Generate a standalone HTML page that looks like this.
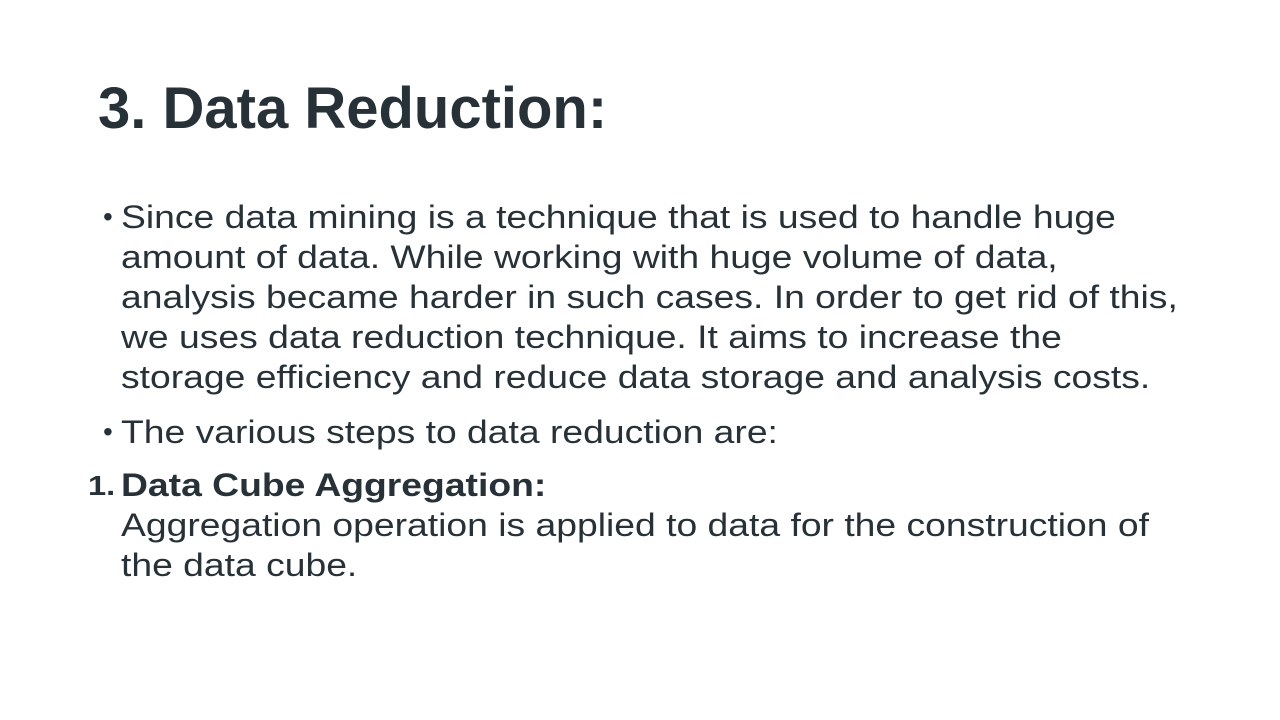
<!DOCTYPE html>
<html><head><style>
body{margin:0;width:1280px;height:720px;background:#fff;position:relative;overflow:hidden;font-family:"Liberation Sans",Arial,sans-serif;color:#263238}
.l{position:absolute;white-space:nowrap;font-size:32px;line-height:32px;left:121px;transform:scaleX(1.165);transform-origin:0 0}
.t{position:absolute;left:98px;top:80px;font-size:58px;line-height:58px;font-weight:bold;white-space:nowrap}
.b{position:absolute;left:103px;font-size:28px;line-height:32px}
</style></head><body>
<div class="t">3. Data Reduction:</div>
<div class="b" style="top:201px">•</div>
<div class="l" style="top:201px">Since data mining is a technique that is used to handle huge</div>
<div class="l" style="top:241px">amount of data. While working with huge volume of data,</div>
<div class="l" style="top:281px">analysis became harder in such cases. In order to get rid of this,</div>
<div class="l" style="top:321px">we uses data reduction technique. It aims to increase the</div>
<div class="l" style="top:361px">storage efficiency and reduce data storage and analysis costs.</div>
<div class="b" style="top:416px">•</div>
<div class="l" style="top:416px">The various steps to data reduction are:</div>
<div class="l" style="top:470px;left:88px;font-size:28px;font-weight:bold">1.</div>
<div class="l" style="top:469px;font-weight:bold">Data Cube Aggregation:</div>
<div class="l" style="top:509px">Aggregation operation is applied to data for the construction of</div>
<div class="l" style="top:549px">the data cube.</div>
</body></html>
